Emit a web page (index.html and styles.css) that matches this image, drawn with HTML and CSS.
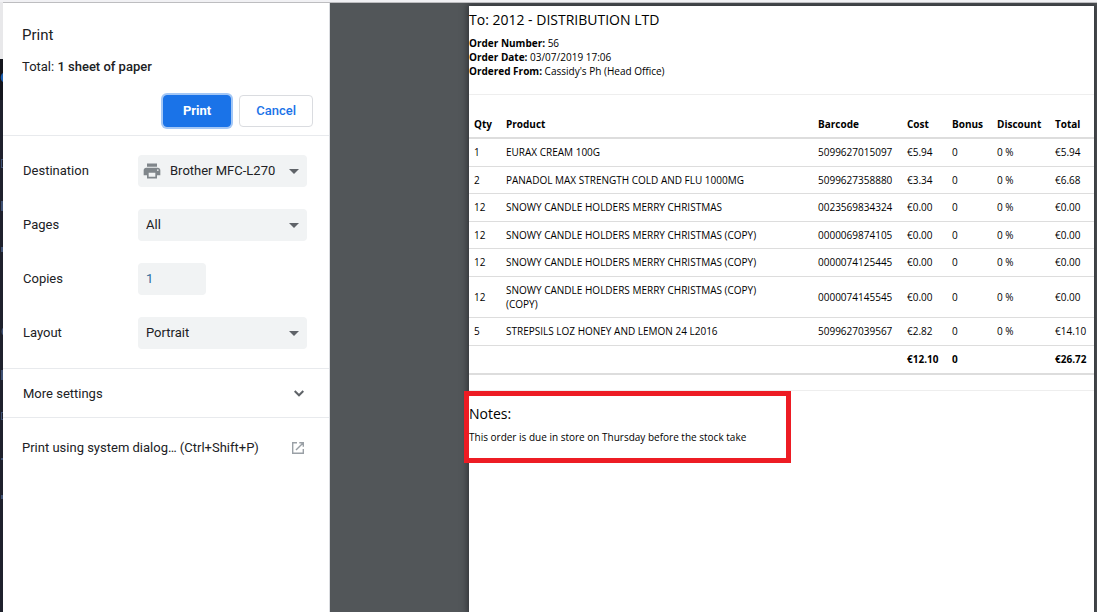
FILE: index.html
```html
<!DOCTYPE html>
<html lang="en">
<head>
<meta charset="utf-8">
<meta name="viewport" content="width=device-width, initial-scale=1">
<title>Print</title>
<link rel="stylesheet" href="styles.css">
</head>
<body>
<div class="backdrop">
  <div class="rail">
    <svg class="marks" viewBox="0 0 3 550" aria-hidden="true"><path fill="#1c5fb0" d="M3 14C0 15 0 22 3 23z"/><path fill="#3f5173" d="M1 100h2v1H2v7h1v1H1zM1 142h2v10H1zM1 188h2v5H1zM3 269c-2 1-2 6 0 7zM1 311h2v10H1zM1 353h2v1H2v6h1v1H1zM1 399h2v2H1zM1 436h2v4H1z"/></svg>
  </div>
  <div class="dialog">
    <form class="settings">
      <header class="summary">
        <h1 class="title">Print</h1>
        <p class="total">Total: <b>1 sheet of paper</b></p>
        <div class="actions">
          <button class="btn btn-primary" type="submit">Print</button>
          <button class="btn" type="button">Cancel</button>
        </div>
      </header>
      <div class="fields">
        <div class="field">
          <label for="destination">Destination</label>
          <div class="picker picker-icon">
            <svg class="printer" viewBox="0 0 24 24" aria-hidden="true"><path d="M19 8H5c-1.660 0-3 1.340-3 3v6h4v4h12v-4h4v-6c0-1.660-1.340-3-3-3zm-3 11H8v-5h8v5zm3-7c-.55 0-1-.45-1-1s.45-1 1-1 1 .45 1 1-.45 1-1 1zm-1-9H6v4h12V3z"/></svg>
            <select id="destination"><option>Brother MFC-L270</option></select>
            <svg class="arrow" viewBox="0 0 10 5" aria-hidden="true"><path d="M0 0h10L5 5z"/></svg>
          </div>
        </div>
        <div class="field">
          <label for="pages">Pages</label>
          <div class="picker">
            <select id="pages"><option>All</option></select>
            <svg class="arrow" viewBox="0 0 10 5" aria-hidden="true"><path d="M0 0h10L5 5z"/></svg>
          </div>
        </div>
        <div class="field">
          <label for="copies">Copies</label>
          <input class="copies" id="copies" type="text" inputmode="numeric" value="1">
        </div>
        <div class="field">
          <label for="layout">Layout</label>
          <div class="picker">
            <select id="layout"><option>Portrait</option></select>
            <svg class="arrow" viewBox="0 0 10 5" aria-hidden="true"><path d="M0 0h10L5 5z"/></svg>
          </div>
        </div>
      </div>
      <button class="row more" type="button">
        <span>More settings</span>
        <svg class="chevron" viewBox="0 0 10 7" aria-hidden="true"><path d="M.7 1 5 5.300 9.300 1"/></svg>
      </button>
      <button class="row system" type="button">
        <span>Print using system dialog… (Ctrl+Shift+P)</span>
        <svg class="launch" viewBox="0 0 12 12" aria-hidden="true"><path d="M5 .7H.7v10.600h10.600V7M7.300.7h4v4M11.300.7 4 8"/></svg>
      </button>
    </form>
    <main class="preview">
      <article class="sheet">
        <header class="order">
          <h2 class="heading">To: 2012 - DISTRIBUTION LTD</h2>
          <p><b>Order Number:</b> 56</p>
          <p><b>Order Date:</b> 03/07/2019 17:06</p>
          <p><b>Ordered From:</b> Cassidy's Ph (Head Office)</p>
        </header>
        <table class="items">
          <colgroup><col class="c-qty"><col><col class="c-barcode"><col class="c-cost"><col class="c-bonus"><col class="c-discount"><col class="c-total"></colgroup>
          <thead>
            <tr><th>Qty</th><th>Product</th><th>Barcode</th><th>Cost</th><th>Bonus</th><th>Discount</th><th>Total</th></tr>
          </thead>
          <tbody>
            <tr><td>1</td><td>EURAX CREAM 100G</td><td>5099627015097</td><td>€5.94</td><td>0</td><td>0 %</td><td>€5.94</td></tr>
            <tr><td>2</td><td>PANADOL MAX STRENGTH COLD AND FLU 1000MG</td><td>5099627358880</td><td>€3.34</td><td>0</td><td>0 %</td><td>€6.68</td></tr>
            <tr><td>12</td><td>SNOWY CANDLE HOLDERS MERRY CHRISTMAS</td><td>0023569834324</td><td>€0.00</td><td>0</td><td>0 %</td><td>€0.00</td></tr>
            <tr><td>12</td><td>SNOWY CANDLE HOLDERS MERRY CHRISTMAS (COPY)</td><td>0000069874105</td><td>€0.00</td><td>0</td><td>0 %</td><td>€0.00</td></tr>
            <tr><td>12</td><td>SNOWY CANDLE HOLDERS MERRY CHRISTMAS (COPY)</td><td>0000074125445</td><td>€0.00</td><td>0</td><td>0 %</td><td>€0.00</td></tr>
            <tr><td>12</td><td>SNOWY CANDLE HOLDERS MERRY CHRISTMAS (COPY) (COPY)</td><td>0000074145545</td><td>€0.00</td><td>0</td><td>0 %</td><td>€0.00</td></tr>
            <tr><td>5</td><td>STREPSILS LOZ HONEY AND LEMON 24 L2016</td><td>5099627039567</td><td>€2.82</td><td>0</td><td>0 %</td><td>€14.10</td></tr>
          </tbody>
          <tfoot>
            <tr><td></td><td></td><td></td><td>€12.10</td><td>0</td><td></td><td>€26.72</td></tr>
          </tfoot>
        </table>
        <hr class="rule">
        <section class="notes">
          <h2 class="heading">Notes:</h2>
          <p>This order is due in store on Thursday before the stock take</p>
        </section>
      </article>
    </main>
  </div>
</div>
</body>
</html>
```
FILE: styles.css
```css
* { box-sizing: border-box; }

body {
  margin: 0;
  font-family: Roboto, "Liberation Sans", sans-serif;
  font-size: 13px;
  color: #202124;
}

h1, h2, p { margin: 0; font-weight: 400; }

.backdrop {
  display: grid;
  grid-template-columns: 3px 1fr;
  min-height: 100vh;
  padding-top: 2px;
  background: #f1f1f4;
}

.rail {
  padding-top: 57px;
  background: linear-gradient(#e8e8ea 57px, #14151c 57px, #14151c 98px, #1f212d 98px);
}

.marks { display: block; width: 3px; }

.dialog {
  display: grid;
  grid-template-columns: 327px 1fr;
  border-top: 1px solid #bdbdc0;
}

.settings {
  background: #fff;
  border-right: 1px solid #dadce0;
}

.summary {
  padding: 22px 16px 8px 19px;
  border-bottom: 1px solid #e8eaed;
}

.title { font-size: 15px; line-height: 20px; }

.total { margin-top: 12px; line-height: 20px; }
.total b { font-weight: 500; }

.actions {
  display: flex;
  justify-content: flex-end;
  gap: 8px;
  margin-top: 18px;
}

.btn {
  height: 32px;
  padding: 0 16px 2px;
  border: 1px solid #dadce0;
  border-radius: 4px;
  background: #fff;
  color: #1a73e8;
  font: 500 13px Roboto, sans-serif;
}

.btn-primary {
  border-color: #1a73e8;
  background: #1a73e8;
  color: #fff;
  padding: 0 19px 2px;
  font-weight: 700;
  box-shadow: 0 0 0 2px #a3c7f6;
}

.fields {
  display: grid;
  gap: 22px;
  padding: 19px 22px 19px 20px;
  border-bottom: 1px solid #e8eaed;
}

.field {
  display: grid;
  grid-template-columns: 115px 1fr;
  align-items: center;
}

.field label { padding-bottom: 2px; }

.picker { display: grid; align-items: center; }
.picker > * { grid-area: 1 / 1; }

.picker select, .copies {
  height: 32px;
  padding: 0 8px 2px;
  border: 0;
  border-radius: 4px;
  background: #f1f3f4;
  color: #202124;
  font: 13px Roboto, sans-serif;
  appearance: none;
}

.picker-icon select { padding-left: 32px; }

.copies { width: 68px; color: #2f6c9e; }

.printer { z-index: 1; width: 20px; margin-left: 4px; fill: #80868b; }

.arrow { justify-self: end; width: 10px; margin-right: 8px; fill: #5f6368; }

.row {
  display: flex;
  align-items: center;
  justify-content: space-between;
  width: 100%;
  border: 0;
  background: none;
  color: #202124;
  font: 13px Roboto, sans-serif;
}

.more {
  height: 49px;
  padding: 0 25px 0 20px;
  border-bottom: 1px solid #e8eaed;
}

.system { height: 59px; padding: 0 25px 0 19px; }

.chevron { width: 10px; fill: none; stroke: #5f6368; stroke-width: 2; }

.launch { width: 12px; fill: none; stroke: #9aa0a6; stroke-width: 1.4; }

.preview {
  display: grid;
  padding: 3px 3px 0 139px;
  background: #525659;
  overflow: hidden;
}

.sheet {
  background: #fff;
  box-shadow: 0 0 6px 2px #33363a;
  color: #000;
  font: 10px/14px "Open Sans", "Noto Sans", sans-serif;
}

.order {
  padding: 4px 0 16px;
  border-bottom: 1px solid #eee;
}

.heading { font-size: 14px; line-height: 20px; }
.order .heading { margin-bottom: 6px; }

.items {
  width: 100%;
  margin-top: 14px;
  border-collapse: collapse;
  table-layout: fixed;
  border-bottom: 2px solid #ddd;
}

.items th, .items td {
  padding: 6px 0 7px 5px;
  border-top: 1px solid #ddd;
  text-align: left;
  white-space: nowrap;
}

.items tr:nth-child(even) td { padding-bottom: 6px; }
.items th { padding: 8px 0 6px 5px; border-top: 0; border-bottom: 2px solid #ddd; }
.items td:nth-child(2) { padding-right: 40px; white-space: normal; }
.items tfoot td { font-weight: 700; }

.c-qty { width: 32px; }
.c-barcode { width: 89px; }
.c-cost { width: 45px; }
.c-bonus { width: 45px; }
.c-discount { width: 58px; }
.c-total { width: 44px; }

.rule {
  margin: 15px 0 0;
  border: 0;
  border-top: 1px solid #eee;
}

.notes {
  position: relative;
  width: 327px;
  margin-left: -5px;
  padding: 8px 0 14px;
  border: 5px solid #ed1c24;
}

.notes p { margin-top: 6px; }
```
